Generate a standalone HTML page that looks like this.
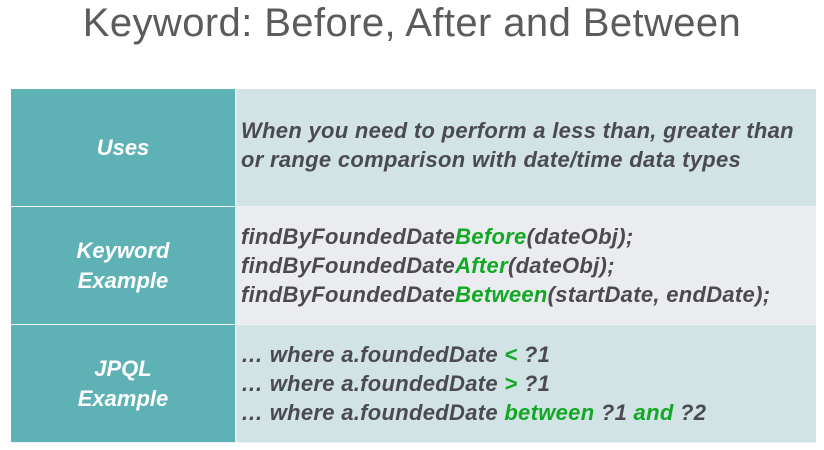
<!DOCTYPE html>
<html><head><style>
body{margin:0;width:824px;height:450px;background:#fff;overflow:hidden;font-family:"Liberation Sans",sans-serif;}
h1{margin:0;position:absolute;top:0;left:0;width:824px;text-align:center;font-weight:normal;font-size:40px;letter-spacing:0.4px;color:#5b5b5e;line-height:46px;}
.t{position:absolute;left:11px;top:89px;width:805px;}
.r{display:flex;height:117px;border-bottom:1px solid #eef4f5;}
.l{width:224px;background:#5eb1b5;color:#fff;font-weight:bold;font-style:italic;font-size:22px;display:flex;align-items:center;justify-content:center;text-align:center;line-height:30px;border-right:2px solid #e4f0f0;}
.c{flex:1;padding-left:4px;color:#4b4a50;font-weight:bold;font-style:italic;font-size:22px;letter-spacing:0.3px;line-height:29px;display:flex;flex-direction:column;justify-content:center;white-space:nowrap;}
.a{background:#d1e3e5}.b{background:#eaecef}
g{color:#12a824}
</style></head><body>
<h1>Keyword: Before, After and Between</h1>
<div class="t">
<div class="r"><div class="l">Uses</div><div class="c a" style="justify-content:flex-start;padding-top:27px"><div>When you need to perform a less than, greater than</div><div>or range comparison with date/time data types</div></div></div>
<div class="r"><div class="l">Keyword<br>Example</div><div class="c b"><div>findByFoundedDate<g>Before</g>(dateObj);</div><div>findByFoundedDate<g>After</g>(dateObj);</div><div>findByFoundedDate<g>Between</g>(startDate, endDate);</div></div></div>
<div class="r"><div class="l">JPQL<br>Example</div><div class="c a"><div>… where a.foundedDate <g>&lt;</g> ?1</div><div>… where a.foundedDate <g>&gt;</g> ?1</div><div>… where a.foundedDate <g>between</g> ?1 <g>and</g> ?2</div></div></div>
</div>
</body></html>
